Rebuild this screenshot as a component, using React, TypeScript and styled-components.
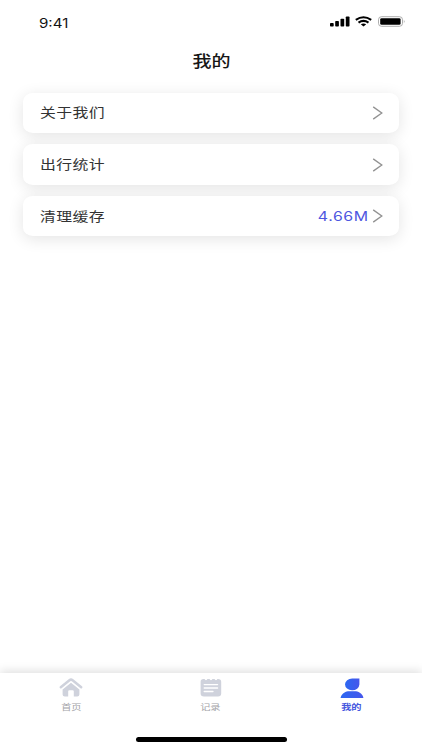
import React from "react";
import styled, { createGlobalStyle } from "styled-components";

const GlobalStyle = createGlobalStyle`
  * { box-sizing: border-box; }
  body { margin: 0; background: #fff; }
`;

const Screen = styled.div`
  width: 422px;
  height: 750px;
  display: flex;
  flex-direction: column;
  overflow: hidden;
  background: #fff;
  font-family: "Liberation Sans", "Noto Sans CJK SC", sans-serif;
`;

const StatusBar = styled.header`
  height: 44px;
  flex: none;
  display: flex;
  justify-content: space-between;
  padding: 14px 16px 0 39px;
`;

const Label = styled.span<{ $origin?: string; $stretch?: number }>`
  display: inline-block;
  white-space: nowrap;
  transform: scaleX(${(p) => p.$stretch ?? 1.22});
  transform-origin: ${(p) => p.$origin ?? "left"} center;
`;

const Clock = styled(Label)`
  height: 20px;
  font: 400 12.6px/20px Inter, "Liberation Sans", sans-serif;
  color: #111;
`;

const StatusIcons = styled.svg`
  display: block;
  width: 78px;
  height: 16px;
`;

const TitleBar = styled.h1`
  height: 35px;
  flex: none;
  margin: 0;
  padding-left: 2px;
  display: flex;
  justify-content: center;
  font-size: 15.6px;
  line-height: 32px;
  font-weight: 500;
  font-family: "Noto Sans CJK SC", sans-serif;
  color: #161616;
`;

const List = styled.main`
  flex: 1;
  display: flex;
  flex-direction: column;
  gap: 11.2px;
  padding: 13.6px 22.7px 0;
`;

const Row = styled.button`
  height: 40.5px;
  flex: none;
  border: 0;
  border-radius: 10px / 8.5px;
  background: #fff;
  box-shadow: 0 3px 16px rgba(0, 0, 0, 0.11);
  display: flex;
  align-items: center;
  padding: 0 16px 0 17px;
  text-align: left;
`;

const RowName = styled(Label)`
  font: 400 13px/20px "Noto Sans CJK SC", sans-serif;
  letter-spacing: 0.35px;
  color: #333;
  margin-right: auto;
  padding-bottom: 1px;
`;

const Value = styled(Label)`
  font: 400 13px/20px Inter, "Liberation Sans", sans-serif;
  letter-spacing: 0.5px;
  color: #4d55df;
  margin-right: 4px;
`;

const Arrow = styled.svg`
  width: 11px;
  height: 14px;
  fill: none;
  stroke: #929292;
  stroke-width: 1.3;
`;

const TabBar = styled.nav`
  height: 77px;
  flex: none;
  display: grid;
  grid-template-columns: 142px 137px 145px;
  background: #fff;
  box-shadow: 0 -2px 9px rgba(0, 0, 0, 0.13);
  align-content: space-between;
`;

const Tab = styled.a<{ $active?: boolean }>`
  display: flex;
  flex-direction: column;
  align-items: center;
  padding-top: 4px;
  font: ${(p) => (p.$active ? 700 : 400)} 8.4px/13px "Noto Sans CJK SC", sans-serif;
  color: ${(p) => (p.$active ? "#4558de" : "#a4a4a8")};
`;

const TabIcon = styled.svg`
  width: 26px;
  height: 22px;
  margin-bottom: 1px;
`;

const HomeIndicator = styled.div`
  grid-column: 1 / -1;
  width: 151px;
  height: 4.8px;
  margin: 0 0 8.5px 136px;
  border-radius: 3px;
  background: #000;
`;

const rows = [
  { name: "关于我们" },
  { name: "出行统计" },
  { name: "清理缓存", value: "4.66M" },
];

export default function App() {
  return (
    <Screen>
      <GlobalStyle />
      <StatusBar>
        <Clock $stretch={1.2}>9:41</Clock>
        <StatusIcons viewBox="0 0 78 16" aria-label="信号 电池">
          <rect x="2" y="9" width="3.7" height="3.5" rx="0.8" />
          <rect x="7.2" y="7" width="3.7" height="5.5" rx="0.8" />
          <rect x="12.5" y="4.8" width="3.7" height="7.7" rx="0.8" />
          <rect x="17.8" y="2.4" width="3.7" height="10.1" rx="0.8" />
          <g fill="none" stroke="#000" strokeWidth="2.1">
            <path d="M27.8 5.8Q35.5 0.7 43.2 5.8" />
            <path d="M30.5 8.6Q35.5 5.2 40.5 8.6" />
          </g>
          <path d="M32.8 10.3Q35.5 8.6 38.2 10.3L35.5 12.6Z" />
          <rect x="50.5" y="2.7" width="24" height="9.6" rx="3" fill="none" stroke="#999" strokeWidth="0.8" />
          <rect x="52.2" y="4.2" width="20.4" height="6.6" rx="1.4" />
          <path d="M75.9 5.8Q77.3 7.5 75.9 9.2Z" fill="#999" />
        </StatusIcons>
      </StatusBar>
      <TitleBar>
        <Label $origin="center">我的</Label>
      </TitleBar>
      <List>
        {rows.map((row) => (
          <Row key={row.name}>
            <RowName>{row.name}</RowName>
            {row.value && <Value $origin="right">{row.value}</Value>}
            <Arrow viewBox="0 0 11 14">
              <path d="M1.2 0.9L9.8 7L1.2 13.1" />
            </Arrow>
          </Row>
        ))}
      </List>
      <TabBar>
        <Tab>
          <TabIcon viewBox="0 0 26 22" fill="#cfd2dc">
            <path d="M2.8 10.3L11.4 3.2Q13 2 14.6 3.2L23.2 10.3" fill="none" stroke="#cfd2dc" strokeWidth="2.5" strokeLinecap="round" />
            <path d="M13 5.8L21.4 12.4V17.6Q21.4 19.6 19.2 19.6H15.8V14.2Q15.8 13.2 14.6 13.2H11.4Q10.2 13.2 10.2 14.2V19.6H6.8Q4.6 19.6 4.6 17.6V12.4Z" />
          </TabIcon>
          <Label $origin="center">首页</Label>
        </Tab>
        <Tab>
          <TabIcon viewBox="0 0 26 22">
            <path d="M5.5 2H6.8V2.4Q8 4 9.2 2.4V2H11.8V2.4Q13 4 14.2 2.4V2H16.8V2.4Q18 4 19.2 2.4V2H20Q23.2 2 23.2 4.7V16.5Q23.2 19.5 20 19.5H6Q2.6 19.5 2.6 16.5V4.7Q2.6 2 5.5 2Z" fill="#cfd2dc" />
            <path d="M6.2 7.6H19.6M6.2 11H19.6M6.2 14.5H15" fill="none" stroke="#fff" strokeWidth="1.3" strokeLinecap="round" />
          </TabIcon>
          <Label $origin="center">记录</Label>
        </Tab>
        <Tab $active>
          <TabIcon viewBox="0 0 26 22">
            <defs>
              <linearGradient id="profile" x1="0" x2="1" y1="0" y2="0">
                <stop offset="0" stopColor="#2c68f2" />
                <stop offset="1" stopColor="#4657eb" />
              </linearGradient>
            </defs>
            <path d="M1.6 20.9C2 17.2 5.4 14.9 9 14.2H17C20.6 14.9 24 17.2 24.4 20.9Z" fill="url(#profile)" />
            <path d="M13.2 1.5H20.4V7.6A7.2 5.9 0 1 1 13.2 1.5Z" fill="url(#profile)" stroke="#fff" strokeWidth="1.6" paintOrder="stroke" />
          </TabIcon>
          <Label $origin="center">我的</Label>
        </Tab>
        <HomeIndicator />
      </TabBar>
    </Screen>
  );
}
